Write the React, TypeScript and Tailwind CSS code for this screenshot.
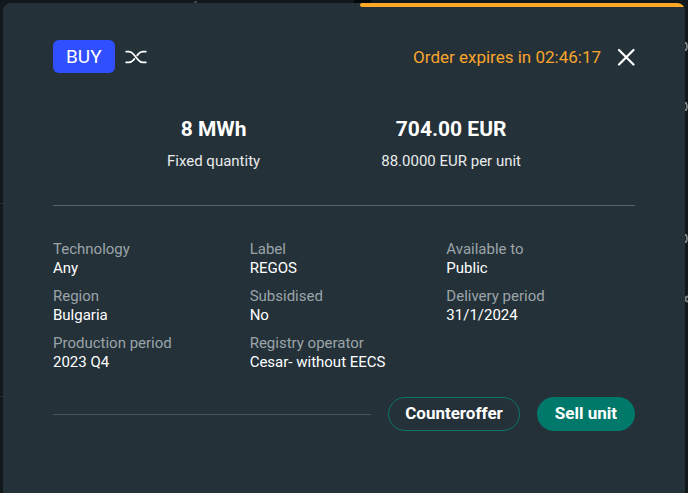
import React from 'react';

const details = [
  { label: 'Technology', value: 'Any' },
  { label: 'Label', value: 'REGOS' },
  { label: 'Available to', value: 'Public' },
  { label: 'Region', value: 'Bulgaria' },
  { label: 'Subsidised', value: 'No' },
  { label: 'Delivery period', value: '31/1/2024' },
  { label: 'Production period', value: '2023 Q4' },
  { label: 'Registry operator', value: 'Cesar- without EECS' },
];

const ShuffleIcon: React.FC = () => (
  <svg
    width="22"
    height="14"
    viewBox="0 0 22 14"
    fill="none"
    stroke="currentColor"
    strokeWidth="1.8"
    strokeLinecap="round"
    aria-hidden="true"
  >
    <path d="M1.2 1.6h2.6c2 0 3.4 1 4.7 2.6l4.8 5.8c1.2 1.5 2.6 2.4 4.6 2.4h2.9" />
    <path d="M20.8 1.6h-2.9c-2 0-3.4.9-4.6 2.4l-1.1 1.4" />
    <path d="M1.2 12.4h2.6c2 0 3.4-.9 4.7-2.4l.9-1.1" />
  </svg>
);

const CloseIcon: React.FC = () => (
  <svg
    width="18"
    height="18"
    viewBox="0 0 18 18"
    fill="none"
    stroke="currentColor"
    strokeWidth="2.2"
    strokeLinecap="round"
    aria-hidden="true"
  >
    <path d="M2 2l14.5 14.5M16.5 2L2 16.5" />
  </svg>
);

// Edges of the dimmed page that stay visible around the dialog
const Backdrop: React.FC = () => (
  <svg className="absolute inset-0 h-full w-full" aria-hidden="true">
    <rect x="354" y="0" width="17" height="3" fill="#05080a" />
    <rect x="194" y="1" width="3" height="2" fill="#3b4448" />
    <g fill="none" stroke="#7d8385" strokeWidth="1.8">
      <path d="M684 43h2q2 3.500 0 7h-2M684 103h2q2 3.500 0 7h-2M684 235h2q2 3.500 0 7h-2" />
      <circle cx="688" cy="299" r="2.500" />
    </g>
    <path d="M0 203.500h3M0 396.500h3" stroke="#263136" />
  </svg>
);

const App: React.FC = () => {
  return (
    <main className="relative flex min-h-screen bg-[#11191d] px-[3px] pt-[3px] font-[Roboto,sans-serif] text-white">
      <Backdrop />
      <section
        role="dialog"
        aria-label="Buy order"
        className="relative flex-1 overflow-hidden rounded-t-lg bg-[#243139]"
      >
        <div className="flex h-1 justify-end">
          <div className="w-[325px] rounded-l-full bg-[#ffa726]"></div>
        </div>

        <div className="px-[50px] pt-[33px] pb-12">
          <header className="flex items-center justify-between">
            <div className="flex items-center gap-2.5">
              <span className="rounded-md bg-[#304ffe] px-[13px] text-[19px] leading-[33px]">BUY</span>
              <ShuffleIcon />
            </div>
            <div className="flex items-center gap-4 text-[#f9a52b]">
              <span className="text-[17px] leading-6">Order expires in 02:46:17</span>
              <button type="button" aria-label="Close" className="text-white">
                <CloseIcon />
              </button>
            </div>
          </header>

          <div className="mt-10 flex justify-between border-b border-[#4f6568] px-[114px] pb-7 text-center">
            <div>
              <p className="text-[21px] leading-8 font-bold">8 MWh</p>
              <p className="text-[15px] leading-8 text-[#e9ebec]">Fixed quantity</p>
            </div>
            <div>
              <p className="text-[21px] leading-8 font-bold">704.00 EUR</p>
              <p className="text-[15px] leading-8 text-[#e9ebec]">88.0000 EUR per unit</p>
            </div>
          </div>

          <dl className="mt-[34px] grid grid-cols-3 gap-x-2 gap-y-[9px] text-[15px] leading-[19px]">
            {details.map((item) => (
              <div key={item.label}>
                <dt className="text-[#9ba4a8]">{item.label}</dt>
                <dd>{item.value}</dd>
              </div>
            ))}
          </dl>

          <footer className="mt-[25px] flex items-center gap-[17px]">
            <div className="h-px flex-1 bg-[#43575c]"></div>
            <button
              type="button"
              className="h-[34px] rounded-full border border-[#0b7568] px-4 text-[17px] font-bold"
            >
              Counteroffer
            </button>
            <button type="button" className="h-[34px] rounded-full bg-[#00796b] px-[18px] text-[17px] font-bold">
              Sell unit
            </button>
          </footer>
        </div>
      </section>
    </main>
  );
};

export default App;
